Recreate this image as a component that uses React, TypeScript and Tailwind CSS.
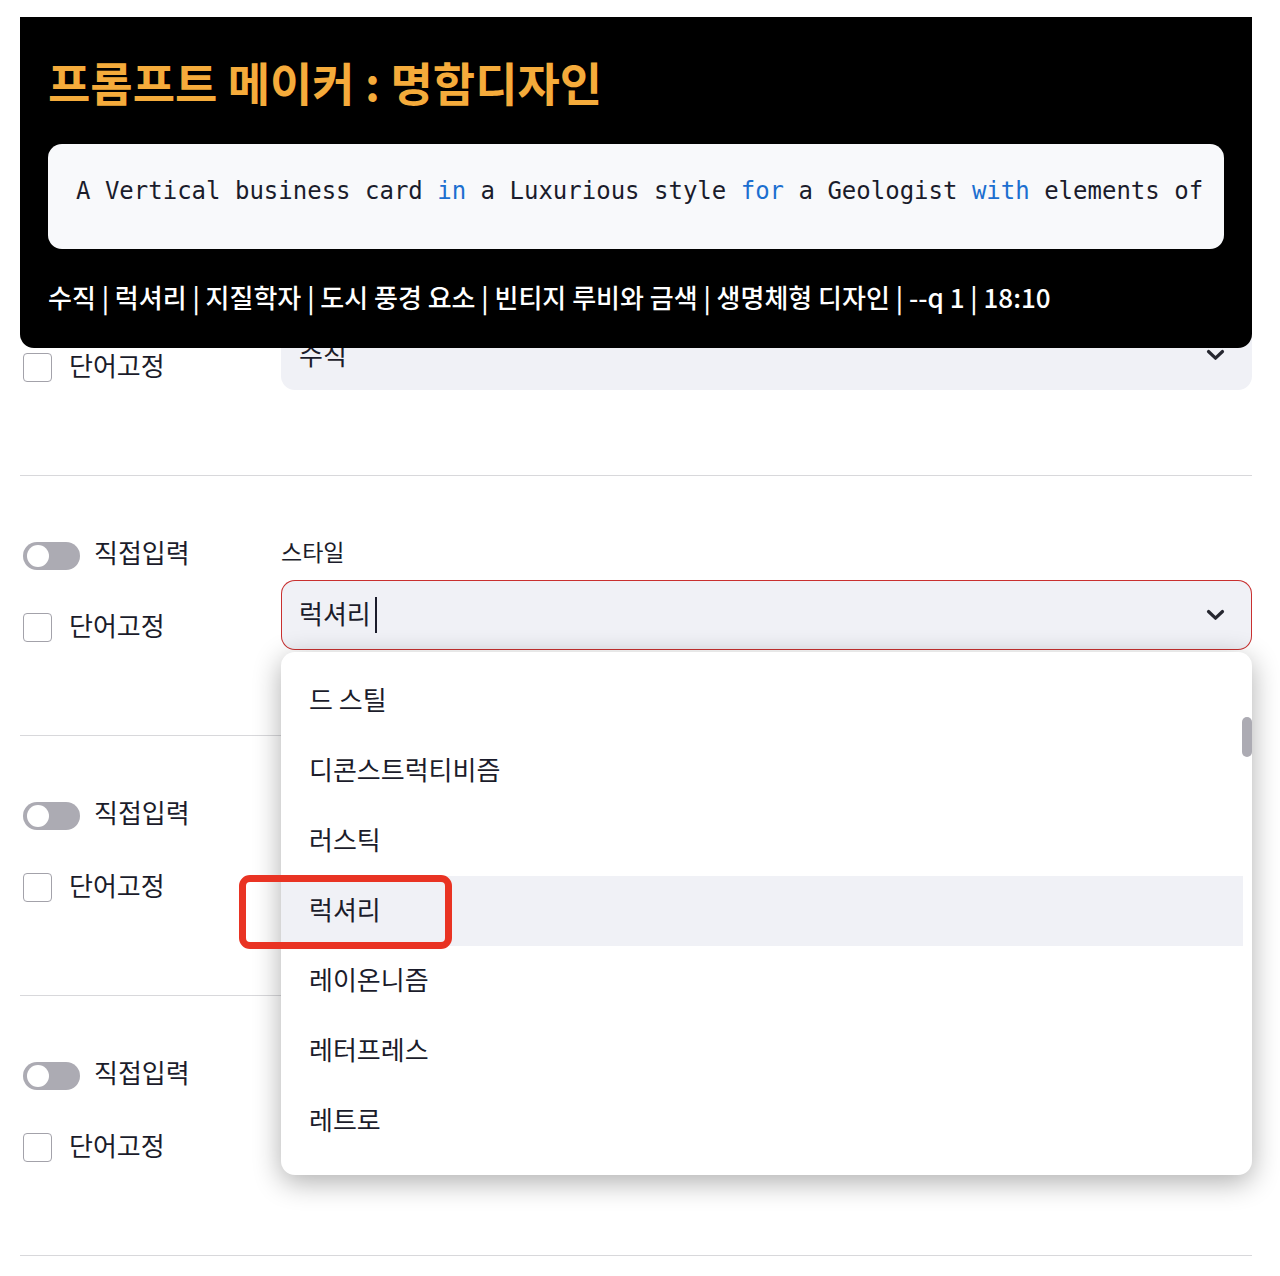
import { useState } from "react";
import type { ReactNode } from "react";

const options = ["드 스틸", "디콘스트럭티비즘", "러스틱", "럭셔리", "레이온니즘", "레터프레스", "레트로"];

function Chevron() {
  return (
    <svg className="pointer-events-none h-7 w-7 shrink-0" viewBox="0 0 28 28" fill="none" aria-hidden="true">
      <path d="M6.5 10.5L13.5 17.2L20.5 10.5" stroke="#262730" strokeWidth="3.2" strokeLinecap="round" strokeLinejoin="round" />
    </svg>
  );
}

function Toggle() {
  const [on, setOn] = useState(false);
  return (
    <label className="flex h-7 items-center gap-3.5">
      <input type="checkbox" role="switch" checked={on} onChange={() => setOn(!on)} className="peer sr-only" />
      <span className="flex h-7 w-[57px] items-center rounded-full bg-[#acabb3] px-1 peer-checked:justify-end peer-checked:bg-[#ff4b4b]">
        <span className="h-[22px] w-[22px] rounded-full bg-white" />
      </span>
      <span className="-mt-2">직접입력</span>
    </label>
  );
}

function LockCheck() {
  return (
    <label className="flex h-7 items-center gap-[17px]">
      <input type="checkbox" className="h-[29px] w-[29px] appearance-none rounded-[4px] border border-[#a3a2aa] bg-white checked:bg-[#ff4b4b]" />
      <span className="-mt-1">단어고정</span>
    </label>
  );
}

function Row({ children, toggle = true }: { children?: ReactNode; toggle?: boolean }) {
  return (
    <section className="grid min-h-[260px] grid-cols-[233px_minmax(0,1fr)] gap-7 border-b border-[#d8d8db] pt-[62px]">
      <div className="flex flex-col gap-[43px] pl-[3px] pt-1">
        {toggle ? <Toggle /> : <div className="h-7" />}
        <LockCheck />
      </div>
      <div className="flex flex-col">{children}</div>
    </section>
  );
}

function Options() {
  return (
    <ul
      role="listbox"
      aria-label="스타일"
      className="absolute inset-x-0 top-full z-20 mt-0.5 rounded-[14px] bg-white pb-[19px] pt-3.5 shadow-[0_7px_28px_rgba(0,0,0,0.32)]"
    >
      {options.map((name) => (
        <li
          key={name}
          role="option"
          aria-selected={name === "럭셔리"}
          className="relative mr-[9px] flex h-[70px] items-center pb-1 pl-7 aria-selected:bg-[#f0f1f6]"
        >
          {name}
          {name === "럭셔리" && (
            <span className="absolute -left-[42px] -top-px h-[74px] w-[213px] rounded-[11px] border-[7px] border-[#e93323]" />
          )}
        </li>
      ))}
      <li role="presentation" className="absolute right-0 top-[65px] h-10 w-2.5 rounded-full bg-[#acabb3]" />
    </ul>
  );
}

export default function App() {
  const [style, setStyle] = useState("럭셔리");
  return (
    <div className="bg-white pb-5 pl-5 pr-7 pt-[17px] font-['Noto_Sans_CJK_KR',sans-serif] text-[26px] leading-[38px] text-[#1b1c2b]">
      <header className="relative z-10 -mb-[132px] rounded-b-[14px] bg-black px-7 pb-8 pt-8">
        <h1 className="text-[46px] font-bold leading-[64px] text-[#f5ab3b]">프롬프트 메이커 : 명함디자인</h1>
        <pre className="mt-[31px] h-[105px] overflow-hidden rounded-[14px] bg-[#f8f9fb] px-7 pt-7 font-['DejaVu_Sans_Mono',monospace] text-[24px] leading-[38px]">
          <code className="font-['DejaVu_Sans_Mono',monospace]">
            A Vertical business card <span className="text-[#1c6fd0]">in</span> a Luxurious style{" "}
            <span className="text-[#1c6fd0]">for</span> a Geologist <span className="text-[#1c6fd0]">with</span> elements of
          </code>
        </pre>
        <p className="mt-[29px] whitespace-nowrap font-medium text-white">
          수직 | 럭셔리 | 지질학자 | 도시 풍경 요소 | 빈티지 루비와 금색 | 생명체형 디자인 | --q 1 | 18:10
        </p>
      </header>
      <main>
        <Row toggle={false}>
          <div className="relative mt-[42px] flex h-[70px] items-center rounded-[14px] bg-[#f0f1f6]">
            <select aria-label="수직" className="h-full w-full appearance-none bg-transparent pb-0.5 pl-[18px] outline-none">
              <option>수직</option>
            </select>
            <span className="pointer-events-none absolute right-[22px]">
              <Chevron />
            </span>
          </div>
        </Row>
        <Row>
          <label htmlFor="style" className="h-7 text-[23px] leading-[26px]">
            스타일
          </label>
          <div className="relative mt-3.5 flex h-[70px] items-center rounded-[14px] bg-[#f0f1f6] pl-[18px] pr-[22px] ring-1 ring-inset ring-[#c9302f]">
            <input
              id="style"
              role="combobox"
              aria-expanded="true"
              value={style}
              onChange={(e) => setStyle(e.target.value)}
              className="field-sizing-content bg-transparent pb-1 caret-transparent outline-none"
            />
            <span className="ml-1 h-9 w-0.5 bg-[#1b1c2b]" />
            <span className="ml-auto">
              <Chevron />
            </span>
            <Options />
          </div>
        </Row>
        <Row />
        <Row />
      </main>
    </div>
  );
}
